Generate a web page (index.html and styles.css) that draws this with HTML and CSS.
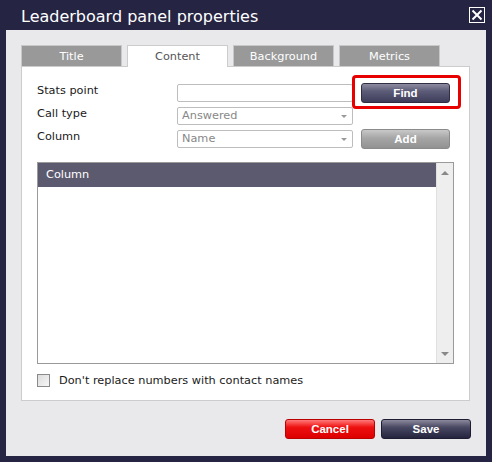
FILE: index.html
```html
<!DOCTYPE html>
<html lang="en">
<head>
    <meta charset="UTF-8">
    <meta name="viewport" content="width=device-width, initial-scale=1.0">
    <title>Leaderboard panel properties</title>
    <link rel="stylesheet" href="styles.css">
</head>
<body>
    <header class="dialog-header">
        <h1>Leaderboard panel properties</h1>
        <span class="close-btn">
            <svg width="16" height="16" viewBox="0 0 16 16">
                <rect x="0.5" y="0.5" width="15" height="15" fill="none" stroke="#fff" stroke-width="1"/>
                <path d="M3.5 3.5 L12.5 12.5 M12.5 3.5 L3.5 12.5" stroke="#fff" stroke-width="2"/>
            </svg>
        </span>
    </header>

    <div class="dialog-body">
        <div class="tabs">
            <div class="tab">Title</div>
            <div class="tab active">Content</div>
            <div class="tab">Background</div>
            <div class="tab">Metrics</div>
        </div>

        <div class="tab-content">
            <div class="form-grid">
                <label>Stats point</label>
                <div class="field"></div>
                <div class="btn-cell">
                    <button class="btn btn-dark">Find</button>
                    <span class="highlight"></span>
                </div>

                <label>Call type</label>
                <div class="field select">Answered<span class="caret"></span></div>
                <div></div>

                <label>Column</label>
                <div class="field select">Name<span class="caret"></span></div>
                <div class="btn-cell">
                    <button class="btn btn-grey">Add</button>
                </div>
            </div>

            <div class="list-box">
                <div class="list-main">
                    <div class="list-head">Column</div>
                </div>
                <div class="scrollbar">
                    <span class="arrow up"></span>
                    <span class="arrow down"></span>
                </div>
            </div>

            <div class="check-row">
                <span class="checkbox"></span>
                <span>Don't replace numbers with contact names</span>
            </div>
        </div>

        <div class="dialog-footer">
            <button class="btn btn-red">Cancel</button>
            <button class="btn btn-navy">Save</button>
        </div>
    </div>
</body>
</html>
```

FILE: styles.css
```css
html, body {
    height: 100%;
}

body {
    margin: 0;
    padding: 0 6px 6px 6px;
    box-sizing: border-box;
    background-color: #252443;
    font-family: "DejaVu Sans", Verdana, sans-serif;
    font-size: 11.3px;
    color: #1a1a1a;
    display: flex;
    flex-direction: column;
}

.dialog-header {
    height: 30px;
    display: flex;
    align-items: center;
    justify-content: space-between;
    padding-left: 15px;
    padding-right: 1px;
}

.dialog-header h1 {
    margin: 0;
    font-size: 16px;
    font-weight: normal;
    color: #fff;
    padding-top: 3px;
}

.close-btn {
    display: flex;
    margin-top: -1px;
}

.dialog-body {
    flex: 1;
    background-color: #e9e9eb;
    padding: 15px 16px 17px 15px;
    display: flex;
    flex-direction: column;
}

.tabs {
    display: flex;
    gap: 5px;
}

.tab {
    width: 101px;
    height: 21px;
    box-sizing: border-box;
    background-color: #999;
    border: 1px solid #c8c8c8;
    border-bottom: none;
    color: #fff;
    text-align: center;
    line-height: 21px;
}

.tab.active {
    background-color: #fff;
    color: #555;
    border-color: #ccc;
    position: relative;
    margin-bottom: -1px;
    height: 22px;
}

.tab-content {
    flex: 1;
    background-color: #fff;
    border: 1px solid #ccc;
    padding: 16px 15px 0 15px;
}

.form-grid {
    display: grid;
    grid-template-columns: 140px 176px 97px;
    grid-auto-rows: 23px;
}

.form-grid label {
    line-height: 18px;
    margin-top: -1px;
}

.field {
    margin-top: 1px;
    height: 18px;
    box-sizing: border-box;
    border: 1px solid #bdbdbd;
    border-radius: 2px;
    position: relative;
}

.select {
    padding-left: 4px;
    line-height: 16px;
    color: #888;
}

.caret {
    position: absolute;
    right: 5px;
    top: 7px;
    border-left: 3px solid transparent;
    border-right: 3px solid transparent;
    border-top: 3px solid #999;
}

.btn-cell {
    position: relative;
    width: 89px;
    height: 20px;
    justify-self: end;
}

.btn {
    width: 89px;
    height: 20px;
    border-radius: 3px;
    font-family: "Liberation Sans", Arial, sans-serif;
    font-weight: bold;
    font-size: 11.5px;
    color: #fff;
    padding: 0;
    cursor: pointer;
}

.btn-dark {
    border: 1px solid #2f2e45;
    background: linear-gradient(#8c8ba0 0%, #5d5c78 40%, #3e3d5a 100%);
}

.btn-grey {
    border: 1px solid #8a8a8a;
    background: linear-gradient(#c8c8c8 0%, #a6a6a6 45%, #929292 100%);
}

.btn-red {
    border: 1px solid #b00;
    background: linear-gradient(#ff7a7a 0%, #ee1111 40%, #dd0000 100%);
    width: 90px;
}

.btn-navy {
    border: 1px solid #1d1c33;
    background: linear-gradient(#8a899c 0%, #4a4963 40%, #25243f 100%);
    width: 90px;
}

.highlight {
    position: absolute;
    left: -9px;
    right: -11px;
    top: -8px;
    bottom: -6px;
    border: 3px solid #e60000;
    border-radius: 4px;
    pointer-events: none;
}

.list-box {
    margin-top: 10px;
    width: 417px;
    height: 202px;
    box-sizing: border-box;
    border: 1px solid #9a9a9a;
    display: flex;
}

.list-main {
    flex: 1;
}

.list-head {
    height: 24px;
    background-color: #5b5a6f;
    color: #fff;
    line-height: 24px;
    padding-left: 8px;
}

.scrollbar {
    width: 16px;
    background-color: #eeeeee;
    border-left: 1px solid #e0e0e0;
    display: flex;
    flex-direction: column;
    justify-content: space-between;
    align-items: center;
    padding: 8px 0 7px 0;
}

.arrow {
    border-left: 4px solid transparent;
    border-right: 4px solid transparent;
}

.arrow.up {
    border-bottom: 4px solid #888;
}

.arrow.down {
    border-top: 4px solid #888;
}

.check-row {
    margin-top: 10px;
    display: flex;
    align-items: center;
    gap: 9px;
}

.checkbox {
    width: 13px;
    height: 13px;
    box-sizing: border-box;
    border: 1px solid #8a8a8a;
    background: linear-gradient(135deg, #dcdcdc, #f6f6f6);
}

.dialog-footer {
    margin-top: 18px;
    display: flex;
    justify-content: flex-end;
    gap: 6px;
    margin-right: -1px;
}
```
